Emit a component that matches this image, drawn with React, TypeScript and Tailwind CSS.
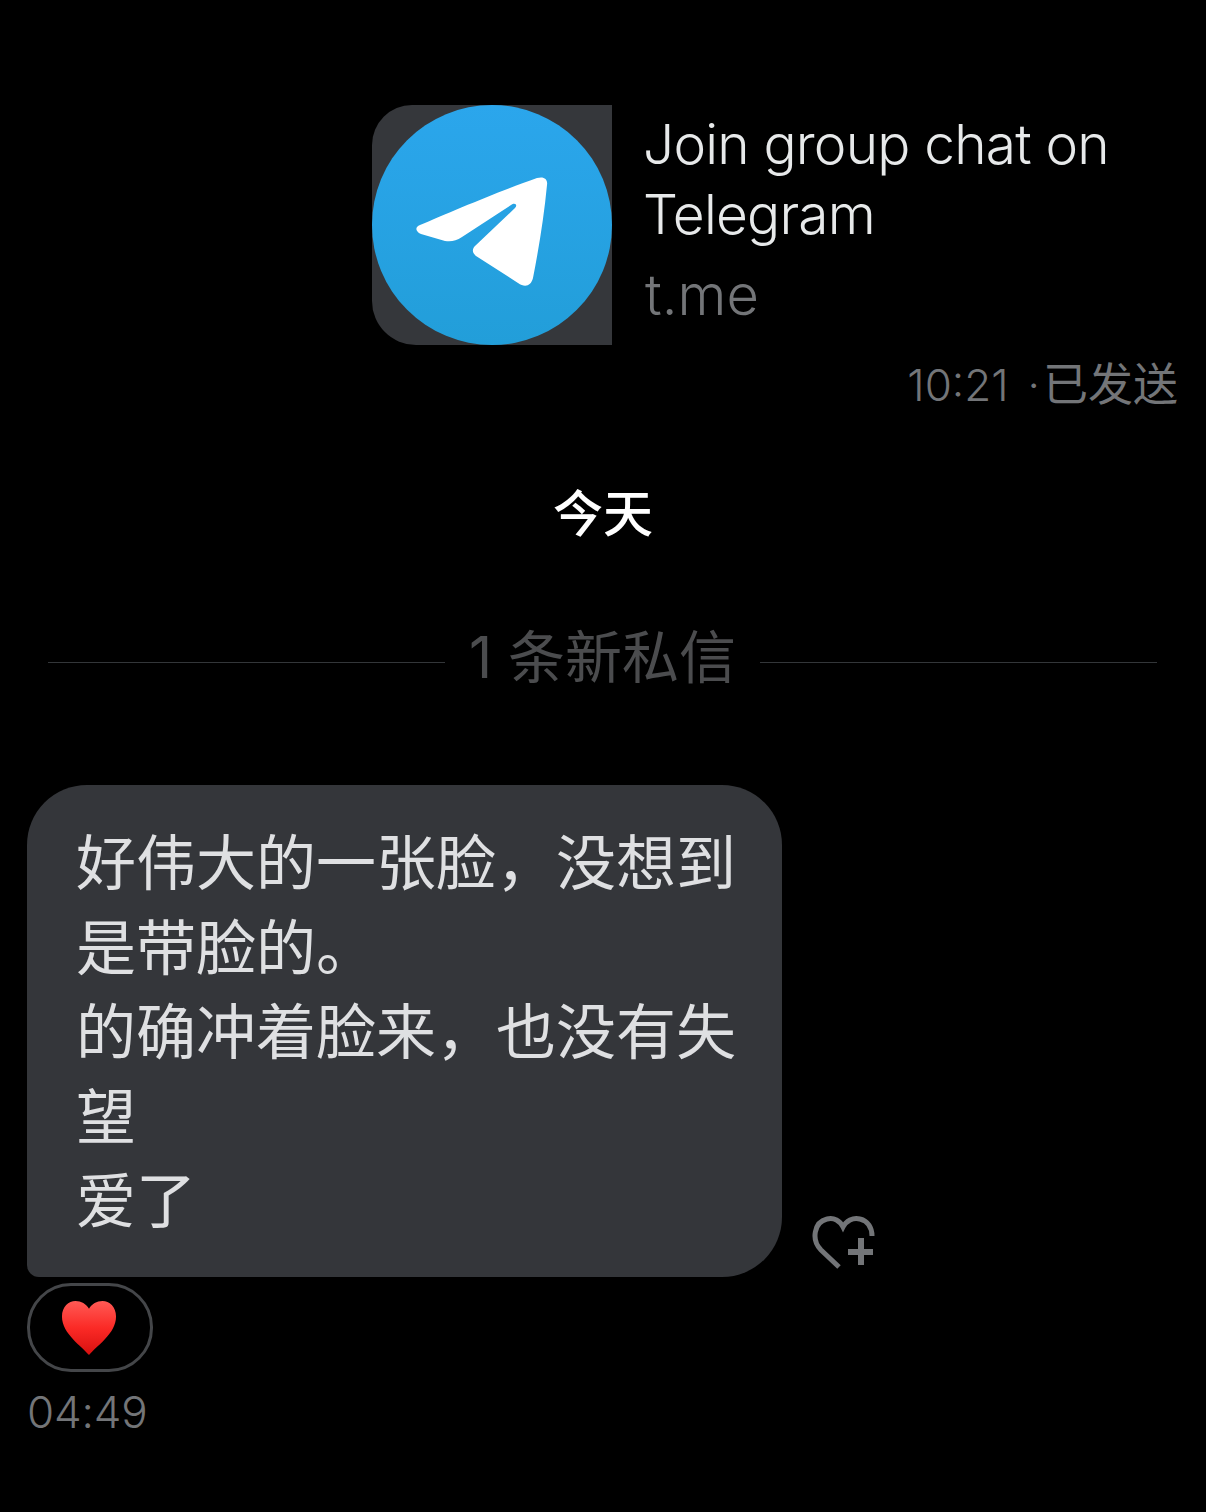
export default function App() {
    return (
        <main className="w-[1206px] h-[1512px] overflow-hidden bg-black font-['Inter','Noto_Sans_CJK_SC',sans-serif]">
            {/* Link card */}
            <div className="flex pt-[105px] pl-[372px]">
                <div className="relative w-[240px] h-[240px] bg-[#35373b] rounded-tl-[40px] rounded-bl-[44px]">
                    <svg className="w-full h-full" viewBox="0 0 240 240">
                        <defs>
                            <linearGradient id="tg" x1="0" y1="0" x2="0" y2="1">
                                <stop offset="0" stopColor="#2ba6ec" />
                                <stop offset="1" stopColor="#229ed9" />
                            </linearGradient>
                        </defs>
                        <circle cx="120" cy="120" r="120" fill="url(#tg)" />
                        <path
                            d="M48 120 C78 107 130 85 165 73 C172 71 176 74 175 80 C172 112 167 142 161 173 C159 181 153 183 146 178 L104 151 C100 148 100 144 103 141 L143 103 C146 100 143 97 139 100 L90 132 C84 136 79 137 73 136 L49 129 C43 126 43 122 48 120 Z"
                            fill="#ffffff"
                        />
                    </svg>
                </div>
                <div className="pl-[32px] text-[#e7e9ea]">
                    <div className="-ml-px w-[500px] pt-[4px] text-[55px] tracking-[-0.8px] leading-[70px] font-light">Join group chat on Telegram</div>
                    <div className="ml-px mt-[11px] text-[56px] leading-[70px] font-light text-[#737578]">t.me</div>
                </div>
            </div>
            <div className="flex justify-end pr-[28px] mt-[8px] text-[44px] leading-[64px] font-light text-[#737578]">
                <span>10:21</span>
                <span className="ml-[19px] mr-[3px]">·</span>
                <span className="font-normal text-[45px]">已发送</span>
            </div>

            {/* Date */}
            <div className="mt-[65px] text-center text-[50px] leading-[64px] font-medium text-white">今天</div>

            {/* New messages divider */}
            <div className="flex items-center justify-center gap-[24px] h-[76px] mt-[78px] pl-[48px] pr-[49px]">
                <div className="flex-1 h-px bg-[#333639]" />
                <div className="-mt-[8px] text-[57px] leading-[76px] font-normal text-[#4b4c4e]">1 条新私信</div>
                <div className="flex-1 h-px bg-[#333639]" />
            </div>

            {/* Message */}
            <div className="flex items-end mt-[85px] pl-[27px]">
                <div className="w-[755px] h-[492px] pl-[49px] pt-[36px] bg-[#34363a] rounded-[60px] rounded-bl-[12px] text-[60px] leading-[84.5px] font-normal whitespace-nowrap text-[#dfe0e2]">
                    <p>好伟大的一张脸，没想到</p>
                    <p>是带脸的。</p>
                    <p>的确冲着脸来，也没有失</p>
                    <p>望</p>
                    <p>爱了</p>
                </div>
                <svg className="ml-[30px] mb-[7px] w-[64px] h-[56px]" viewBox="0 0 64 56" fill="none">
                    <path d="M27 53 L9 36 C-1 26 2 8 15 5 C22 3 28 7 31 13 C34 7 41 3 48 5 C56 7 60 14 60 22" stroke="#737578" strokeWidth="5" />
                    <path d="M49 24 V51 M36 38 H61" stroke="#737578" strokeWidth="6" />
                </svg>
            </div>

            {/* Reaction */}
            <div className="ml-[27px] mt-[6px] flex items-center justify-center w-[126px] h-[89px] rounded-[44px] border-[3px] border-[#444649]">
                <svg className="-ml-[2px] w-[56px] h-[56px]" viewBox="0 0 58 56">
                    <defs>
                        <linearGradient id="heart" x1="0" y1="0" x2="0" y2="1">
                            <stop offset="0" stopColor="#ff5a55" />
                            <stop offset="0.5" stopColor="#fb2a26" />
                            <stop offset="1" stopColor="#d8100f" />
                        </linearGradient>
                    </defs>
                    <path d="M29 56 C22 47 1 34 1 16 C1 6 8 0 15 0 C21 0 26 3 29 8 C32 3 37 0 43 0 C50 0 57 6 57 16 C57 34 36 47 29 56 Z" fill="url(#heart)" />
                </svg>
            </div>
            <div className="ml-[27px] mt-[8px] text-[44px] tracking-[-0.2px] leading-[64px] font-light text-[#737578]">04:49</div>
        </main>
    );
}
